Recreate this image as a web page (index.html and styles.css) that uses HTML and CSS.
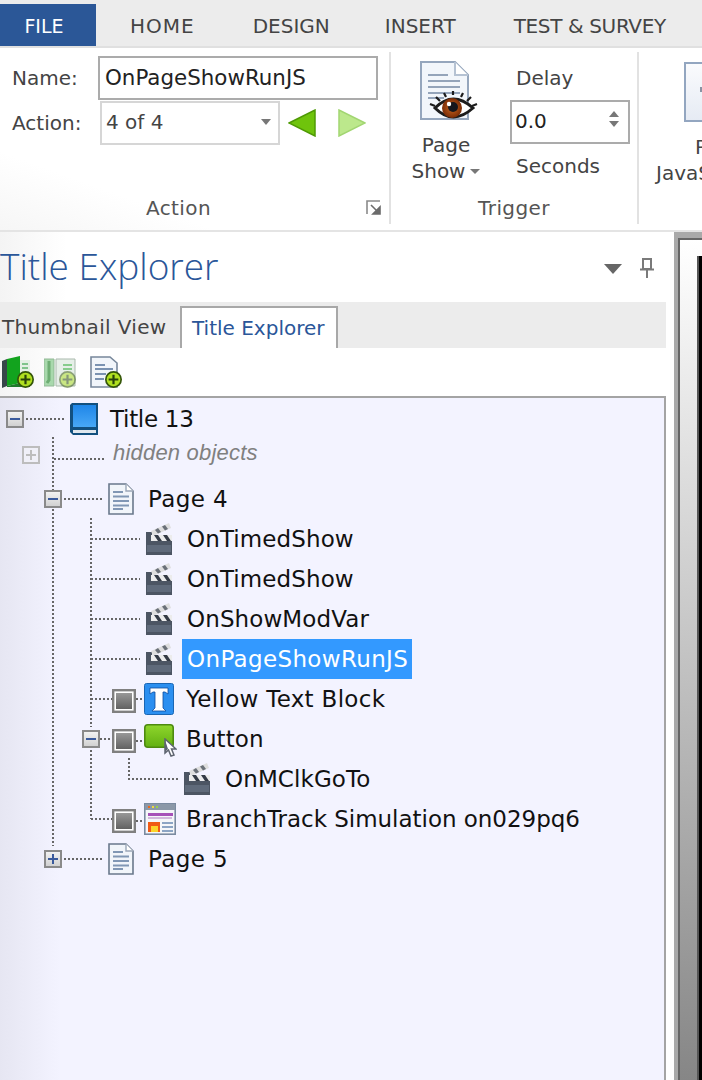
FILE: index.html
```html
<!DOCTYPE html>
<html lang="en">
<head>
<meta charset="utf-8">
<title>Title Explorer</title>
<link rel="stylesheet" href="styles.css">
</head>
<body>
<svg class="defs" width="0" height="0" aria-hidden="true">
  <defs>
    <linearGradient id="bookBlue" x1="0" y1="0" x2="0" y2="1"><stop offset="0" stop-color="#1f86e8"/><stop offset="1" stop-color="#48a8f6"/></linearGradient>
    <linearGradient id="greenBtn" x1="0" y1="0" x2="0" y2="1"><stop offset="0" stop-color="#8fd62c"/><stop offset="1" stop-color="#62b012"/></linearGradient>
    <linearGradient id="boxFill" x1="0" y1="0" x2="0" y2="1"><stop offset="0" stop-color="#989898"/><stop offset="1" stop-color="#626262"/></linearGradient>
    <linearGradient id="expFill" x1="0" y1="0" x2="0" y2="1"><stop offset="0" stop-color="#f4f4f4"/><stop offset="1" stop-color="#cfcfcf"/></linearGradient>
    <radialGradient id="iris"><stop offset="0" stop-color="#c9651f"/><stop offset="1" stop-color="#7a2c06"/></radialGradient>
    <symbol id="page" viewBox="0 0 26 32">
      <path d="M1 1H18L25 8V31H1Z" fill="#f1f5fa" stroke="#69788c" stroke-width="1.6"/>
      <path d="M18 1V8H25" fill="#fff" stroke="#9aa7b8" stroke-width="1.4"/>
      <path d="M5 9H15M5 13.500H21M5 18H21M5 22.500H21M5 26H15" stroke="#8097b4" stroke-width="2"/>
    </symbol>
    <symbol id="clap" viewBox="0 0 26 32">
      <path d="M0 9H6V13H26V32H0Z" fill="#4c5563"/>
      <path d="M1 22H25V29H1Z" fill="#5f6a7a"/>
      <path d="M5 8L23 0L25 5L7 13Z" fill="#dedede"/>
      <path d="M9 7L12 10.500L15 9L12 5ZM16 3.500L19 7.500L22 6L19 2Z" fill="#6a7078"/>
      <path d="M5 12H26V18H5Z" fill="#ececec"/>
      <path d="M8 12H12L16 18H12ZM17 12H21L25 18H21Z" fill="#343b46"/>
    </symbol>
    <symbol id="state" viewBox="0 0 24 24">
      <rect x="1.200" y="1.200" width="21.600" height="21.600" fill="#fff" stroke="#808080" stroke-width="2.400"/>
      <rect x="4" y="4" width="16" height="16" fill="url(#boxFill)"/>
    </symbol>
    <symbol id="addBadge" viewBox="0 0 14 14">
      <circle cx="7" cy="7" r="6.300" fill="#b0e020" stroke="#35560a" stroke-width="1.400"/>
      <path d="M7 3V11M3 7H11" stroke="#28420a" stroke-width="1.800"/>
    </symbol>
  </defs>
</svg>

<nav class="tabs">
  <span class="tab tab-file">FILE</span>
  <span class="tab tab-home">HOME</span>
  <span class="tab tab-design">DESIGN</span>
  <span class="tab tab-insert">INSERT</span>
  <span class="tab tab-test">TEST &amp; SURVEY</span>
</nav>

<section class="ribbon">
  <div class="group group-action">
    <div class="field-row">
      <span class="field-label">Name:</span>
      <span class="name-input">OnPageShowRunJS</span>
    </div>
    <div class="field-row field-row-action">
      <span class="field-label">Action:</span>
      <span class="combo">4 of 4<i class="caret"></i></span>
      <svg class="arrow" width="28" height="28" viewBox="0 0 28 28"><path d="M1 14L27 1V27Z" fill="#6fc40c" stroke="#4f9a05" stroke-width="1.500"/></svg>
      <svg class="arrow arrow-next" width="28" height="28" viewBox="0 0 28 28"><path d="M27 14L1 1V27Z" fill="#bce88c" stroke="#a2d672" stroke-width="1.500"/></svg>
    </div>
    <div class="group-title">Action</div>
    <svg class="launcher" width="15" height="15" viewBox="0 0 15 15"><path d="M1 14V1H14" fill="none" stroke="#8a8a8a" stroke-width="1.600"/><path d="M5 5L12 12M14 7V14H7Z" stroke="#6b6b6b" stroke-width="1.600" fill="#6b6b6b"/></svg>
  </div>

  <div class="group group-trigger">
    <div class="trigger-body">
      <div class="big-button">
        <svg class="eye-icon" width="60" height="62" viewBox="0 0 60 62">
          <path d="M1 2H35L48 15V59H1Z" fill="#f2f6fb" stroke="#95a6bd" stroke-width="2"/>
          <path d="M35 2V15H48" fill="#fff" stroke="#b5c2d3" stroke-width="2"/>
          <path d="M8 15H28M8 21H40M8 27H40M8 33H40M8 38H24" stroke="#94a4ba" stroke-width="2.200"/>
          <path d="M15 48Q33 30 53 48Q33 66 15 48Z" fill="#fff" stroke="#1c1c1c" stroke-width="3"/>
          <path d="M15 46L10 44M20 41L16 37M26 37L24 33M33 35V31M41 37L43 33M47 41L51 37M52 46L57 44" stroke="#1c1c1c" stroke-width="2.200"/>
          <circle cx="32" cy="48" r="10" fill="url(#iris)"/>
          <circle cx="33" cy="47" r="5" fill="#15161c"/>
          <circle cx="29" cy="44" r="2.200" fill="#fff"/>
        </svg>
        <span class="big-label">Page</span>
        <span class="big-label">Show<i class="caret caret-small"></i></span>
      </div>
      <div class="delay">
        <span class="delay-label">Delay</span>
        <span class="spinner">0.0<i class="spin-arrows"><b class="spin-up"></b><b class="spin-down"></b></i></span>
        <span class="delay-label seconds">Seconds</span>
      </div>
    </div>
    <div class="group-title">Trigger</div>
  </div>

  <div class="group group-run">
    <span class="run-icon"><i class="run-mark"></i></span>
    <span class="big-label run-top">P</span>
    <span class="big-label run-bottom">JavaS</span>
  </div>
</section>

<main class="workspace">
  <aside class="pane">
    <header class="pane-head">
      <h1 class="pane-title">Title Explorer</h1>
      <i class="pane-menu"></i>
      <svg class="pin" width="14" height="20" viewBox="0 0 14 20"><path d="M3 1H11V11H3ZM0 11.500H14M7 12V20" fill="none" stroke="#7a7a7a" stroke-width="2"/></svg>
    </header>
    <div class="view-tabs">
      <span class="view-tab view-tab-thumb">Thumbnail View</span>
      <span class="view-tab view-tab-active">Title Explorer</span>
    </div>
    <div class="toolbar">
      <svg width="32" height="32" viewBox="0 0 32 32">
        <path d="M0 5L5 3V30L0 32Z" fill="#37464a"/>
        <path d="M5 3L18 0V27L5 30Z" fill="#12a31e"/>
        <path d="M18 4H28V20H18Z" fill="#e4f0e4"/>
        <path d="M5 30L18 27H28V31H5Z" fill="#1d7a2a"/>
        <path d="M20 8H26M20 12H26" stroke="#7fc48a" stroke-width="2"/>
        <use href="#addBadge" x="15" y="15" width="17" height="17"/>
      </svg>
      <svg width="32" height="32" viewBox="0 0 32 32" class="tool-faded">
        <path d="M0 3H10V30H0Z" fill="#a8d9ac" stroke="#92b896"/>
        <path d="M5 5V24L3 27" stroke="#6fae74" stroke-width="3" fill="none"/>
        <path d="M12 3H31V30H12Z" fill="#e6efe8" stroke="#a9b9ac"/>
        <path d="M19 9H28M19 13H28" stroke="#86cc8c" stroke-width="2"/>
        <use href="#addBadge" x="15" y="15" width="17" height="17" opacity=".5"/>
      </svg>
      <svg class="tool-page" width="32" height="32" viewBox="0 0 32 32">
        <path d="M1 1H20L27 7V31H1Z" fill="#f1f5fa" stroke="#77879b" stroke-width="1.600"/>
        <path d="M5 9H15M5 13H23M5 18H16M5 23H14" stroke="#7a92b1" stroke-width="2"/>
        <use href="#addBadge" x="15" y="15" width="17" height="17"/>
      </svg>
    </div>
    <div class="tree">
      <svg class="tree-lines" width="662" height="480" viewBox="0 398 662 480">
        <g class="dots">
          <path d="M26 419H64M53 437V846M54 459H106M64 499H102"/>
          <path d="M91 518V727M91 750V819M91 539H140M91 579H140M91 619H140M91 659H140M91 699H112M136 699H142"/>
          <path d="M100 739H112M136 741H142M129 758V779H178M91 819H112M136 821H142M64 859H102"/>
        </g>
        <g class="exp">
          <rect x="7" y="411" width="16" height="16"/><path d="M10 419H20"/>
          <rect x="45" y="491" width="16" height="16"/><path d="M48 499H58"/>
          <rect x="83" y="731" width="16" height="16"/><path d="M86 739H96"/>
          <rect x="45" y="851" width="16" height="16"/><path d="M48 859H58M53 854V864"/>
        </g>
        <g class="exp exp-off">
          <rect x="23" y="447" width="16" height="16"/><path d="M26 455H36M31 450V460"/>
        </g>
        <use href="#state" x="112" y="689" width="24" height="24"/>
        <use href="#state" x="112" y="729" width="24" height="24"/>
        <use href="#state" x="112" y="809" width="24" height="24"/>
      </svg>
      <div class="node indent-0">
        <svg class="ico-book" width="28" height="32" viewBox="0 0 28 32">
          <path d="M0 2L2 0H28V32H3L0 29Z" fill="#12507f"/>
          <path d="M3 2H26V24H3Z" fill="url(#bookBlue)"/>
          <path d="M3 27H26V30H3Z" fill="#dfe7ee"/>
        </svg>
        <span class="label label-title">Title 13</span>
      </div>
      <div class="node node-hidden indent-hidden"><span class="label-muted">hidden objects</span></div>
      <div class="node indent-1"><svg class="ico" width="26" height="32"><use href="#page"/></svg><span class="label label-page">Page 4</span></div>
      <div class="node indent-2"><svg class="ico" width="26" height="32"><use href="#clap"/></svg><span class="label">OnTimedShow</span></div>
      <div class="node indent-2"><svg class="ico" width="26" height="32"><use href="#clap"/></svg><span class="label">OnTimedShow</span></div>
      <div class="node indent-2"><svg class="ico" width="26" height="32"><use href="#clap"/></svg><span class="label">OnShowModVar</span></div>
      <div class="node indent-2"><svg class="ico" width="26" height="32"><use href="#clap"/></svg><span class="label label-selected">OnPageShowRunJS</span></div>
      <div class="node indent-obj">
        <svg class="ico-obj" width="30" height="32" viewBox="0 0 30 32">
          <rect x=".5" y=".5" width="29" height="31" rx="2" fill="#2b8ff0" stroke="#1a66b4"/>
          <path d="M6 11V5H24V11L21 9H19V25L22 28H8L11 25V9H9Z" fill="#fff" stroke="#0e4da0" stroke-width=".8"/>
        </svg>
        <span class="label label-yellow">Yellow Text Block</span>
      </div>
      <div class="node indent-obj">
        <span class="btn-icon">
          <svg width="30" height="24" viewBox="0 0 30 24"><rect x=".8" y=".8" width="28.400" height="22.400" rx="3" fill="url(#greenBtn)" stroke="#4d8a10" stroke-width="1.600"/></svg>
          <svg class="cursor" width="13" height="19" viewBox="0 0 13 19"><path d="M1 1V15L4.500 12L7 18L10 17L7.500 11H12Z" fill="#fff" stroke="#5e6470" stroke-width="1.500"/><path d="M1 2V14L4 11Z" fill="#5e6470"/></svg>
        </span>
        <span class="label">Button</span>
      </div>
      <div class="node indent-3"><svg class="ico" width="26" height="32"><use href="#clap"/></svg><span class="label">OnMClkGoTo</span></div>
      <div class="node indent-obj">
        <svg class="ico-obj" width="32" height="32" viewBox="0 0 32 32">
          <rect x=".8" y=".8" width="30.400" height="30.400" fill="#f4f6f9" stroke="#7a8aa0" stroke-width="1.600"/>
          <rect x="1" y="1" width="30" height="6" fill="#8b98a8"/>
          <rect x="4" y="3" width="2" height="2" fill="#ef6a1c"/><rect x="8" y="3" width="2" height="2" fill="#f0d93c"/><rect x="12" y="3" width="2" height="2" fill="#9ad24a"/>
          <rect x="4" y="10" width="25" height="3" fill="#a651b8"/>
          <path d="M4 15H28" stroke="#c7a5d2" stroke-width="1.500"/>
          <rect x="4" y="19" width="12" height="10" fill="#f05a14"/><rect x="7" y="23" width="7" height="6" fill="#fbd42a"/>
          <path d="M18 20H29M18 24H29M18 28H29" stroke="#8ba4c4" stroke-width="2"/>
        </svg>
        <span class="label label-branch">BranchTrack Simulation on029pq6</span>
      </div>
      <div class="node indent-1"><svg class="ico" width="26" height="32"><use href="#page"/></svg><span class="label label-page">Page 5</span></div>
    </div>
  </aside>
  <div class="gutter"></div>
  <div class="stage">
    <div class="stage-inner"><div class="stage-canvas"></div></div>
  </div>
</main>
</body>
</html>
```
FILE: styles.css
```css
* { box-sizing: border-box; }
html, body { margin: 0; padding: 0; }
body {
  width: 702px;
  height: 1080px;
  overflow: hidden;
  background: #fff;
  font-family: "DejaVu Sans", sans-serif;
  color: #333;
  position: relative;
}
i, b { display: block; font-style: normal; }
.defs { position: absolute; }

/* ribbon tabs */
.tabs {
  height: 48px;
  padding-top: 4px;
  display: flex;
  background: #ececec;
  border-bottom: 2px solid #e0e0e0;
  font-size: 20px;
  color: #444;
}
.tab { line-height: 44px; white-space: nowrap; }
.tab-file { width: 96px; padding-right: 8px; background: #2b5797; color: #fff; text-align: center; margin-right: 34px; font-size: 19px; }
.tab-home { margin-right: 58px; letter-spacing: 1px; }
.tab-design { margin-right: 55px; }
.tab-insert { margin-right: 58px; }
.tab-test { letter-spacing: -.35px; }

/* ribbon body */
.ribbon {
  height: 184px;
  display: flex;
  border-bottom: 2px solid #e4e4e4;
  background: linear-gradient(20deg, #f6f6f6, #fff 18%);
  overflow: hidden;
  font-size: 20px;
  color: #444;
}
.group { position: relative; flex: none; }
.group-action {
  width: 391px;
  margin-top: 4px;
  height: 172px;
  border-right: 2px solid #e2e2e2;
  padding: 4px 0 0 12px;
}
.field-row { display: flex; align-items: center; height: 44px; }
.field-label { width: 86px; flex: none; }
.name-input {
  width: 280px;
  height: 44px;
  border: 2px solid #ababab;
  background: #fff;
  padding-left: 5px;
  line-height: 40px;
  font-size: 21.400px;
  color: #222;
}
.field-row-action { margin-top: 1px; }
.combo {
  position: relative;
  margin-left: 2px;
  width: 180px;
  height: 44px;
  border: 2px solid #d6d6d6;
  background: #fff;
  padding-left: 4px;
  line-height: 39px;
  margin-right: 8px;
}
.caret {
  position: absolute;
  right: 7px;
  top: 16px;
  border: 5px solid transparent;
  border-top: 6px solid #777;
  border-bottom: 0;
}
.arrow { flex: none; }
.arrow-next { margin-left: 22px; }
.group-title {
  position: absolute;
  left: 0;
  right: 0;
  top: 142px;
  text-align: center;
  line-height: 28px;
  letter-spacing: .4px;
  color: #555;
}
.group-action .group-title { right: 32px; }
.launcher { position: absolute; left: 366px; top: 148px; }

.group-trigger {
  width: 248px;
  height: 172px;
  margin-top: 4px;
  border-right: 2px solid #e2e2e2;
}
.trigger-body { display: flex; }
.big-button {
  width: 110px;
  margin-right: 9px;
  display: flex;
  flex-direction: column;
  align-items: center;
  padding-top: 8px;
}
.eye-icon { margin: 0 0 10px 7px; }
.big-label { line-height: 26px; white-space: nowrap; }
.caret-small {
  display: inline-block;
  position: static;
  margin: 0 0 3px 5px;
  vertical-align: middle;
  border-width: 5px;
  border-top-width: 5px;
}
.delay { display: flex; flex-direction: column; padding-top: 12px; }
.delay-label { padding-left: 6px; line-height: 28px; height: 36px; }
.seconds { height: auto; padding-top: 8px; }
.spinner {
  position: relative;
  width: 120px;
  height: 44px;
  border: 2px solid #ababab;
  padding-left: 3px;
  line-height: 39px;
  color: #222;
}
.spin-arrows { position: absolute; right: 9px; top: 9px; }
.spin-up, .spin-down { width: 0; border: 5px solid transparent; }
.spin-up { border-bottom: 6px solid #777; border-top: 0; margin-bottom: 4px; }
.spin-down { border-top: 6px solid #777; border-bottom: 0; }

.group-run {
  width: 64px;
  display: flex;
  flex-direction: column;
  align-items: flex-start;
  margin-top: 14px;
}
.run-icon {
  position: relative;
  margin: 0 0 12px 45px;
  width: 60px;
  height: 60px;
  flex: none;
  border: 2px solid #93a6c0;
  background: linear-gradient(#fafbfd, #e6ebf4);
}
.run-mark { position: absolute; left: 14px; top: 23px; width: 4px; height: 5px; background: #8a93a3; }
.run-top { margin-left: 56px; }
.run-bottom { margin-left: 17px; }

/* main split */
.workspace { display: flex; height: 848px; }
.pane {
  width: 666px;
  flex: none;
  display: flex;
  flex-direction: column;
  background: linear-gradient(90deg, #f4f4f4, #fff 10%);
}
.pane-head { height: 70px; position: relative; }
.pane-title {
  margin: 0;
  font-family: "Open Sans", sans-serif;
  font-weight: 300;
  font-size: 37px;
  line-height: 68px;
  color: #2a5699;
}
.pane-menu {
  position: absolute;
  left: 604px;
  top: 32px;
  border: 9px solid transparent;
  border-top: 10px solid #666;
  border-bottom: 0;
}
.pin { position: absolute; left: 640px; top: 26px; }
.view-tabs {
  height: 46px;
  display: flex;
  background: #ececec;
  font-size: 20px;
  padding-top: 4px;
}
.view-tab { line-height: 42px; padding-left: 2px; width: 180px; color: #444; white-space: nowrap; }
.view-tab-thumb { letter-spacing: .35px; }
.view-tab-active {
  width: 158px;
  height: 42px;
  padding-left: 10px;
  line-height: 40px;
  background: #fff;
  border: 2px solid #a8a8a8;
  border-bottom: 0;
  color: #2a5699;
}
.toolbar {
  height: 48px;
  display: flex;
  align-items: center;
  padding: 0 0 0 2px;
  gap: 10px;
}
.tool-page { margin-left: 4px; }
.tree {
  position: relative;
  flex: 1;
  padding-top: 1px;
  border-top: 2px solid #a4a4a4;
  border-right: 2px solid #a4a4a4;
  background: linear-gradient(90deg, #e6e6f2, #f3f3ff 9%);
  font-size: 23px;
  letter-spacing: .1px;
  color: #111;
}
.tree-lines { position: absolute; left: 0; top: 0; }
.dots path { fill: none; stroke: #666; stroke-width: 2; stroke-dasharray: 2 2; }
.exp rect { fill: url(#expFill); stroke: #8a8a8a; stroke-width: 2; }
.exp path { fill: none; stroke: #3a5a9c; stroke-width: 2; }
.exp-off rect { fill: #f0f0f8; stroke: #bdbdbd; }
.exp-off path { stroke: #bdbdbd; }

.node {
  position: relative;
  height: 40px;
  display: flex;
  align-items: center;
  white-space: nowrap;
}
.indent-0 { padding-left: 70px; }
.indent-hidden { padding-left: 113px; }
.indent-1 { padding-left: 108px; }
.indent-2 { padding-left: 146px; }
.indent-3 { padding-left: 184px; }
.indent-obj { padding-left: 144px; }
.node-hidden { align-items: flex-start; }
.label { margin-left: 14px; line-height: 41px; }
.indent-2 .label, .indent-3 .label { margin-left: 15px; }
.label-title { margin-left: 12px; letter-spacing: -.3px; }
.label-page { letter-spacing: .4px; }
.indent-obj .label { margin-left: 12px; }
.indent-obj .label-branch { margin-left: 10px; letter-spacing: -.03px; }
.label-yellow { letter-spacing: .3px; }
.indent-2 .label-selected { margin-left: 10px; padding: 0 4px 0 5px; background: #3399ff; color: #fff; line-height: 40px; letter-spacing: .35px; }
.label-muted {
  font-family: "Liberation Sans", Arial, sans-serif;
  font-style: italic;
  font-size: 22px;
  letter-spacing: .2px;
  line-height: 28px;
  color: #808080;
}
.btn-icon { position: relative; width: 30px; height: 24px; flex: none; margin-top: -6px; }
.btn-icon svg { display: block; }
.cursor { position: absolute; left: 20px; top: 14px; }

/* right side */
.gutter { width: 8px; flex: none; background: #fff; }
.stage {
  flex: 1;
  background: #a9a9a9;
  padding: 6px 0 0 4px;
}
.stage-inner {
  height: 100%;
  border-left: 2px solid #666;
  border-top: 2px solid #666;
  background: linear-gradient(#fff, #868686);
  padding: 16px 0 0 17px;
}
.stage-canvas {
  height: 100%;
  background: #000;
  border-left: 2px solid #555;
}
```
